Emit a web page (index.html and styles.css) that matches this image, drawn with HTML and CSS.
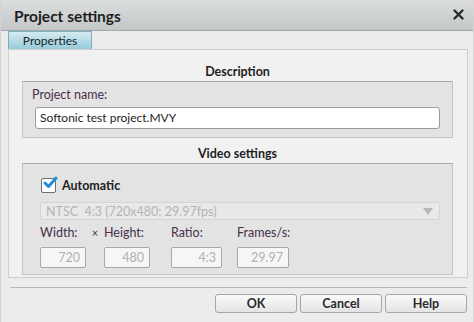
FILE: index.html
```html
<!DOCTYPE html>
<html lang="en">
<head>
    <meta charset="UTF-8">
    <title>Project settings</title>
    <link rel="stylesheet" href="styles.css">
</head>
<body>
    <div class="window">
        <div class="titlebar">
            <span class="title">Project settings</span>
            <svg class="close" width="11" height="11" viewBox="0 0 11 11">
                <path d="M1.5 1.5 L9.5 9.5 M9.5 1.5 L1.5 9.5" stroke="#2a2a2a" stroke-width="2.4" stroke-linecap="round"/>
            </svg>
        </div>

        <div class="tabs">
            <div class="tab">Properties</div>
        </div>

        <div class="panel">
            <div class="section-title first">Description</div>
            <div class="group desc">
                <div class="label">Project name:</div>
                <div class="textbox">Softonic test project.MVY</div>
            </div>

            <div class="section-title">Video settings</div>
            <div class="group video">
                <div class="check-row">
                    <span class="checkbox">
                        <svg width="16" height="14" viewBox="0 0 16 14">
                            <path d="M3 7 L6.5 10.5 L14 2" fill="none" stroke="#1e8fd6" stroke-width="3" stroke-linecap="round" stroke-linejoin="round"/>
                        </svg>
                    </span>
                    <span class="check-label">Automatic</span>
                </div>
                <div class="select">
                    <span>NTSC&nbsp; 4:3 (720x480; 29.97fps)</span>
                    <span class="arrow"></span>
                </div>
                <div class="fields">
                    <div class="field f-width">
                        <div class="label">Width:</div>
                        <div class="num">720</div>
                    </div>
                    <div class="times">×</div>
                    <div class="field f-height">
                        <div class="label">Height:</div>
                        <div class="num">480</div>
                    </div>
                    <div class="field f-ratio">
                        <div class="label">Ratio:</div>
                        <div class="num">4:3</div>
                    </div>
                    <div class="field f-fps">
                        <div class="label">Frames/s:</div>
                        <div class="num">29.97</div>
                    </div>
                </div>
            </div>
        </div>

        <div class="footer">
            <button class="btn">OK</button>
            <button class="btn">Cancel</button>
            <button class="btn">Help</button>
        </div>
    </div>
</body>
</html>
```

FILE: styles.css
```css
body {
    margin: 0;
    background: #ececec;
    font-family: Lato, "Noto Sans", sans-serif;
    font-size: 12.5px;
    color: #222;
}

.window {
    width: 474px;
    height: 322px;
    box-sizing: border-box;
    border-left: 1px solid #d4d4d4;
    border-right: 1px solid #d4d4d4;
    overflow: hidden;
}

.titlebar {
    height: 30px;
    background: linear-gradient(#dcdede, #c3c7c7);
    border-bottom: 1px solid #a4a8a8;
    display: flex;
    align-items: center;
    justify-content: space-between;
    padding: 1px 9px 0 13px;
    box-sizing: border-box;
    height: 31px;
}

.title {
    font-size: 15.5px;
    font-weight: bold;
    color: #1e1e1e;
}

.close {
    margin-top: -3px;
}

.tabs {
    height: 18px;
    padding-left: 7px;
}

.tab {
    width: 82px;
    height: 17px;
    line-height: 17px;
    text-align: center;
    background: linear-gradient(#d4ebf1, #98cbda);
    border: 1px solid #7eafbe;
    border-bottom: none;
    font-size: 12px;
    color: #14242a;
}

.panel {
    margin: 0 5px 0 7px;
    height: 229px;
    box-sizing: border-box;
    background: #f1f1f1;
    border: 1px solid #cfcfcf;
    padding: 0 14px 0 13px;
}

.section-title {
    text-align: center;
    font-weight: bold;
    line-height: 14px;
    padding: 9px 0 2px;
    color: #1e1e1e;
}

.section-title.first {
    padding-top: 15px;
}

.group {
    background: #e3e3e3;
    border: 1px solid #c4c4c4;
    border-top-color: #a8a8a8;
}

.label {
    color: #47304a;
    line-height: 14px;
}

.desc {
    height: 57px;
    box-sizing: border-box;
    padding: 6px 12px 0 9px;
}

.textbox {
    margin: 5px 0 0 3px;
    height: 22px;
    box-sizing: border-box;
    background: #fff;
    border: 1px solid #9a9a9a;
    border-radius: 3px;
    padding-left: 4px;
    line-height: 20px;
    font-size: 12px;
    color: #1e1e1e;
}

.video {
    height: 112px;
    box-sizing: border-box;
    padding: 13px 12px 0 17px;
}

.check-row {
    display: flex;
    align-items: center;
    height: 17px;
    margin-left: 1px;
}

.checkbox {
    width: 13px;
    height: 13px;
    border: 1px solid #6e6e6e;
    border-radius: 2px;
    background: #fff;
    position: relative;
}

.checkbox svg {
    position: absolute;
    left: 0;
    top: -3px;
}

.check-label {
    font-weight: bold;
    margin-left: 6px;
}

.select {
    margin-top: 8px;
    height: 18px;
    box-sizing: border-box;
    background: #e9e9e9;
    border: 1px solid #d4d4d4;
    border-radius: 2px;
    display: flex;
    align-items: center;
    justify-content: space-between;
    padding: 0 6px 0 5px;
    color: #b4b4b4;
}

.arrow {
    width: 0;
    height: 0;
    border-left: 5px solid transparent;
    border-right: 5px solid transparent;
    border-top: 7px solid #b8b8b8;
}

.fields {
    display: flex;
    margin-top: 5px;
}

.field .label {
    line-height: 16px;
    margin-bottom: 6px;
}

.times {
    width: 18px;
    text-align: center;
    line-height: 16px;
    color: #47304a;
    font-size: 11px;
}

.num {
    height: 21px;
    box-sizing: border-box;
    background: #f6f6f6;
    border: 1px solid #a8a8a8;
    border-radius: 2px;
    text-align: right;
    padding-right: 5px;
    line-height: 19px;
    color: #b0b0b0;
}

.f-width .num { width: 46px; }
.f-height { margin-right: 21px; }
.f-height .num { width: 46px; }
.f-ratio { margin-right: 15px; }
.f-ratio .num { width: 51px; }
.f-fps .num { width: 52px; }

.footer {
    margin: 9px 6px 0 9px;
    border-top: 1px solid #b8b8b8;
    display: flex;
    justify-content: flex-end;
    gap: 3px;
    padding-top: 6px;
}

.btn {
    width: 82px;
    height: 19px;
    background: linear-gradient(#fafafa, #e4e4e4);
    border: 1px solid #a6a6a6;
    border-radius: 3px;
    font-family: Lato, "Noto Sans", sans-serif;
    font-size: 12.5px;
    font-weight: bold;
    color: #2a2a2a;
    padding: 0;
    line-height: 16px;
}
```
